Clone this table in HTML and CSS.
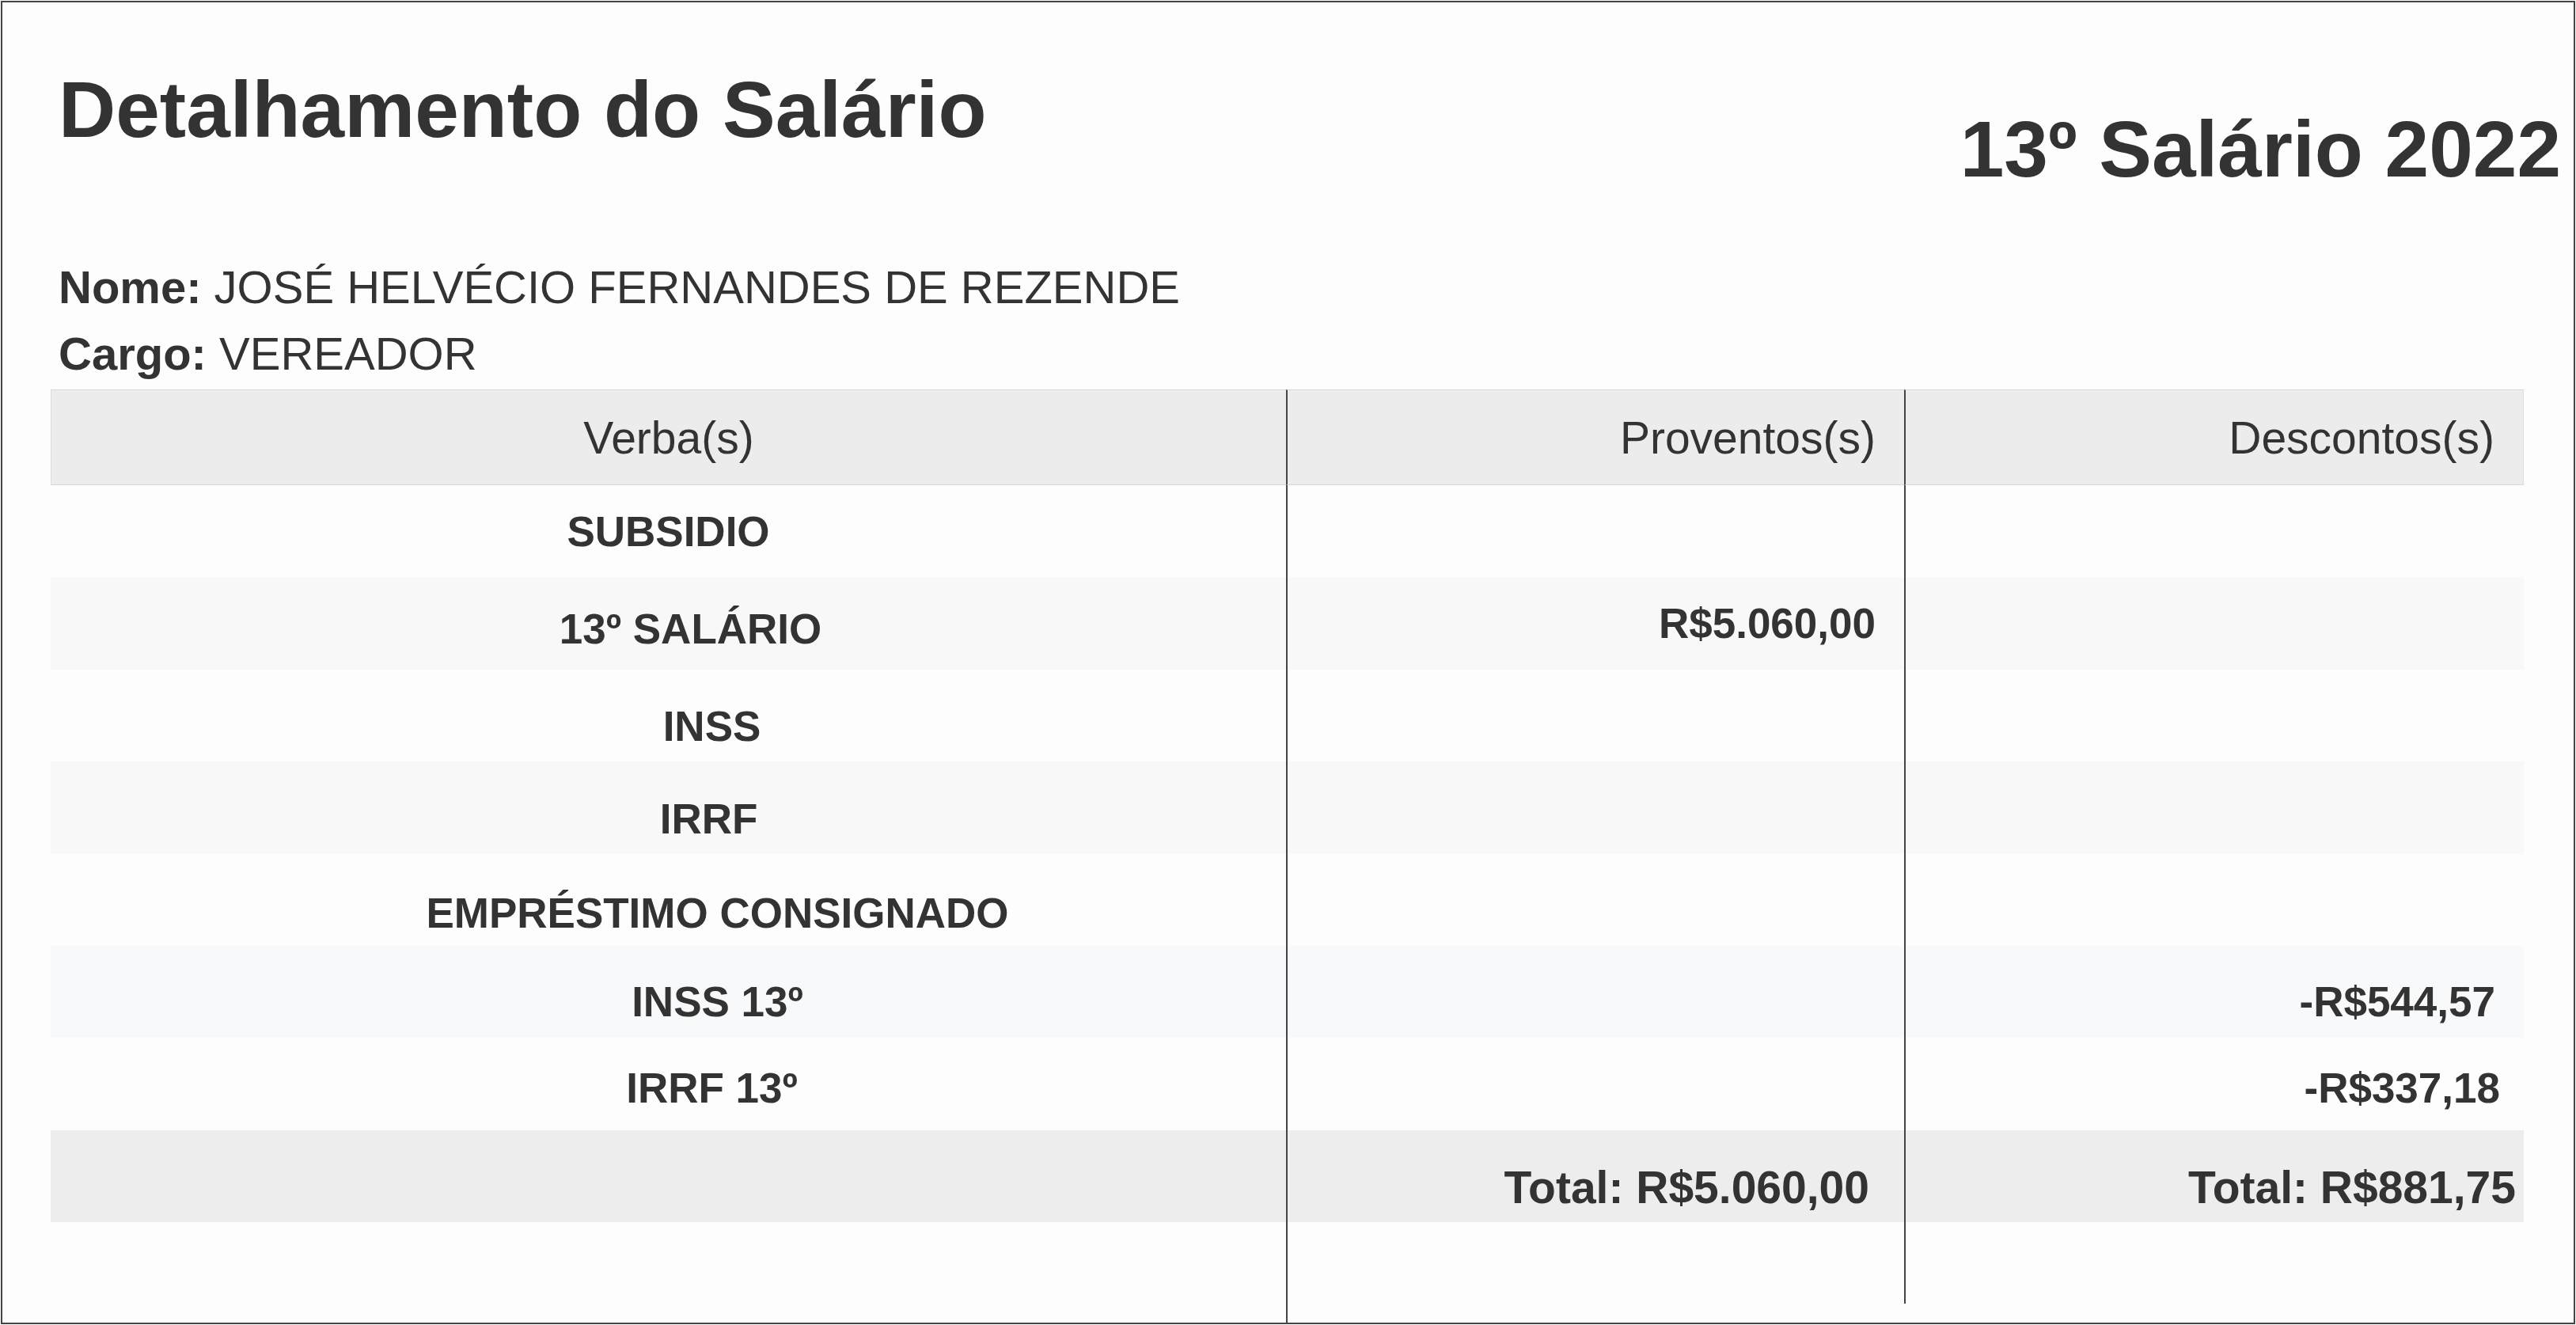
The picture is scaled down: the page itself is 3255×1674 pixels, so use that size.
FILE: index.html
```html
<!DOCTYPE html>
<html lang="pt-BR">
<head>
    <meta charset="UTF-8">
    <meta name="viewport" content="width=device-width, initial-scale=1.0">
    <title>Detalhamento do Salário</title>
    <link rel="stylesheet" href="styles.css">
</head>
<body>

<div class="sheet">
    <div class="sheet-head">
        <h1 class="title">Detalhamento do Salário</h1>
        <h2 class="period">13º Salário 2022</h2>
    </div>

    <div class="info">
        <p><strong>Nome:</strong> JOSÉ HELVÉCIO FERNANDES DE REZENDE</p>
        <p><strong>Cargo:</strong> VEREADOR</p>
    </div>

    <table class="payslip">
        <colgroup>
            <col class="col-verba">
            <col class="col-valor">
            <col>
        </colgroup>
        <thead>
            <tr>
                <th class="verba">Verba(s)</th>
                <th class="valor">Proventos(s)</th>
                <th class="valor">Descontos(s)</th>
            </tr>
        </thead>
        <tbody>
            <tr>
                <td class="verba">SUBSIDIO</td>
                <td class="valor"></td>
                <td class="valor"></td>
            </tr>
            <tr class="row-gray">
                <td class="verba shift-s drop-7">13º SALÁRIO</td>
                <td class="valor">R$5.060,00</td>
                <td class="valor"></td>
            </tr>
            <tr class="drop-14">
                <td class="verba shift-m">INSS</td>
                <td class="valor"></td>
                <td class="valor"></td>
            </tr>
            <tr class="row-gray drop-14">
                <td class="verba shift-ms">IRRF</td>
                <td class="valor"></td>
                <td class="valor"></td>
            </tr>
            <tr class="drop-17">
                <td class="verba shift-l">EMPRÉSTIMO CONSIGNADO</td>
                <td class="valor"></td>
                <td class="valor"></td>
            </tr>
            <tr class="row-blue drop-12">
                <td class="verba shift-l">INSS 13º</td>
                <td class="valor"></td>
                <td class="valor">-R$544,57</td>
            </tr>
            <tr class="row-soft drop-5">
                <td class="verba shift-m">IRRF 13º</td>
                <td class="valor"></td>
                <td class="valor pad-s">-R$337,18</td>
            </tr>
            <tr class="row-total drop-14">
                <td class="verba"></td>
                <td class="valor pad-l">Total: R$5.060,00</td>
                <td class="valor pad-xs">Total: R$881,75</td>
            </tr>
            <tr class="row-tail">
                <td></td>
                <td class="valor"></td>
                <td class="valor"></td>
            </tr>
        </tbody>
    </table>
    <div class="tail"></div>
</div>

</body>
</html>
```

FILE: styles.css
```css
body {
    margin: 0;
    font-family: "Liberation Sans", Arial, sans-serif;
    color: #333;
    background-color: #fff;
}
.sheet {
    margin: 1px;
    height: 1672px;
    box-sizing: border-box;
    border: 2px solid #444;
    padding: 0 63px 0 61px;
    display: flex;
    flex-direction: column;
    background-color: #fdfdfd;
}
.sheet-head {
    display: flex;
    justify-content: space-between;
    align-items: flex-start;
    margin: 78px -47px 0 0;
    padding-left: 10px;
}
.title,
.period {
    margin: 0;
    font-size: 100px;
    font-weight: bold;
    line-height: 115px;
}
.period {
    margin-top: 50px;
}
.info {
    margin-top: 75px;
    padding-left: 10px;
}
.info p {
    margin: 0;
    font-size: 58px;
    line-height: 84px;
}
.payslip {
    margin-top: 3px;
    width: 100%;
    table-layout: fixed;
    border-spacing: 0;
}
.col-verba {
    width: 1561px;
}
.col-valor {
    width: 781px;
}
.payslip th {
    height: 119px;
    padding: 0 36px;
    font-size: 57px;
    font-weight: normal;
    background-color: #ececec;
    border-top: 1px solid #d6d6d6;
    border-bottom: 1px solid #d6d6d6;
}
.payslip th:first-child {
    border-left: 1px solid #dedede;
}
.payslip th:last-child {
    border-right: 1px solid #dedede;
}
.payslip tbody tr {
    height: 116.4px;
}
.payslip td {
    padding: 0 36px;
    font-size: 53px;
    font-weight: bold;
}
.verba {
    text-align: center;
}
.valor {
    text-align: right;
    border-left: 2px solid #444;
}

/* a posição do texto varia um pouco de linha para linha */
.payslip .shift-s {
    padding-left: 92px;
}
.payslip .shift-ms {
    padding-left: 138px;
}
.payslip .shift-m {
    padding-left: 146px;
}
.payslip .shift-l {
    padding-left: 160px;
}
.payslip td.drop-7 {
    padding-top: 14px;
}
.drop-5 td {
    padding-top: 10px;
}
.drop-12 td {
    padding-top: 24px;
}
.drop-14 td {
    padding-top: 28px;
}
.drop-17 td {
    padding-top: 34px;
}
.payslip .pad-s {
    padding-right: 30px;
}
.payslip .pad-l {
    padding-right: 44px;
}
.payslip .pad-xs {
    padding-right: 10px;
}

.row-gray td {
    background-color: #f8f8f8;
}
.row-blue td {
    background-color: #f8f9fa;
}
.row-soft td {
    background-color: #fdfdfd;
}
.row-total td {
    background-color: #ededed;
    font-size: 57px;
}
.payslip .row-tail {
    height: 103px;
}
.row-tail td {
    background-color: transparent;
}
.tail {
    flex: 1;
    margin-left: 1561px;
    border-left: 2px solid #444;
}
```
